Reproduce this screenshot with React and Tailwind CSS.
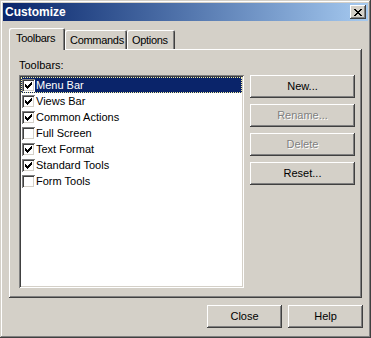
import React from 'react';

const FACE = 'bg-[#d4d0c8]';
const RAISED = 'shadow-[inset_-1px_-1px_#404040,inset_1px_1px_#ffffff,inset_-2px_-2px_#808080,inset_2px_2px_#d4d0c8]';
const TAB = 'rounded-t-[2px] shadow-[inset_1px_1px_#ffffff,inset_-1px_0_#404040,inset_-2px_0_#808080] tracking-[-0.3px]';

const toolbars = [
  { name: 'Menu Bar', on: true },
  { name: 'Views Bar', on: true },
  { name: 'Common Actions', on: true },
  { name: 'Full Screen', on: false },
  { name: 'Text Format', on: true },
  { name: 'Standard Tools', on: true },
  { name: 'Form Tools', on: false },
];

function Check() {
  // classic 7x7 pixel check mark
  const rows = ['......x', '.....xx', 'x...xxx', 'xx.xxx.', 'xxxxx..', '.xxx...', '..x....'];
  return (
    <svg width="7" height="7" viewBox="0 0 7 7" shapeRendering="crispEdges">
      {rows.map((r, y) =>
        r.split('').map((c, x) => (c === 'x' ? <rect key={`${x}-${y}`} x={x} y={y} width="1" height="1" fill="#000" /> : null))
      )}
    </svg>
  );
}

function Button({ children, disabled, className = '' }) {
  return (
    <div
      className={`h-[23px] flex items-center justify-center ${FACE} ${RAISED} ${className} ${
        disabled ? 'text-[#808080] [text-shadow:1px_1px_0_#ffffff]' : 'text-black'
      }`}
    >
      {children}
    </div>
  );
}

export default function App() {
  return (
    <div
      className={`w-[371px] h-[338px] ${FACE} p-[3px] flex flex-col text-[11px] leading-[13px] text-black shadow-[inset_-1px_-1px_#404040,inset_1px_1px_#d4d0c8,inset_-2px_-2px_#808080,inset_2px_2px_#ffffff]`}
      style={{ fontFamily: '"Liberation Sans", Arial, sans-serif' }}
    >
      {/* title bar */}
      <div className="h-[18px] flex items-center justify-between bg-gradient-to-r from-[#0a246a] to-[#a6caf0] pl-[2px] pr-[2px]">
        <span className="font-bold text-white text-[12px]">Customize</span>
        <div className={`w-[16px] h-[14px] ${FACE} ${RAISED} flex items-center justify-center`}>
          <svg width="8" height="7" viewBox="0 0 8 7" shapeRendering="crispEdges">
            <path d="M0 0h2v1h-2zM6 0h2v1h-2zM1 1h2v1h-2zM5 1h2v1h-2zM2 2h4v1h-4zM3 3h2v1h-2zM2 4h4v1h-4zM1 5h2v1h-2zM5 5h2v1h-2zM0 6h2v1h-2zM6 6h2v1h-2z" fill="#000" />
          </svg>
        </div>
      </div>

      <div className="px-[6px] flex flex-col">
        {/* tabs */}
        <div className="flex items-end mt-[7px] h-[21px] relative z-10">
          <div className={`w-[56px] h-[22px] ${FACE} ${TAB} pl-[7px] pt-[4px] -mb-[1px]`}>
            Toolbars
          </div>
          <div className={`w-[62px] h-[19px] ${FACE} ${TAB} pl-[5px] pt-[4px]`}>
            Commands
          </div>
          <div className={`w-[48px] h-[19px] ${FACE} ${TAB} pl-[5px] pt-[4px]`}>
            Options
          </div>
        </div>

        {/* tab panel */}
        <div className={`h-[249px] ${FACE} ${RAISED} pt-[10px] pl-[10px] flex items-start`}>
          <div className="flex flex-col">
            <div className="h-[13px] mb-[3px]">Toolbars:</div>
            <div className="w-[225px] h-[213px] bg-white p-[2px] shadow-[inset_1px_1px_#808080,inset_-1px_-1px_#ffffff,inset_2px_2px_#404040,inset_-2px_-2px_#d4d0c8]">
              {toolbars.map((t, i) => (
                <div
                  key={t.name}
                  className={`h-[16px] flex items-center ${
                    i === 0 ? 'bg-[#0a246a] text-white outline-1 outline-dotted outline-offset-[-1px] outline-[#f5f0a0]' : 'text-black'
                  }`}
                >
                  <div className="w-[13px] h-[13px] ml-[1px] bg-white flex items-center justify-center shadow-[inset_1px_1px_#808080,inset_-1px_-1px_#ffffff,inset_2px_2px_#404040,inset_-2px_-2px_#d4d0c8]">
                    {t.on && <Check />}
                  </div>
                  <span className="ml-[1px]">{t.name}</span>
                </div>
              ))}
            </div>
          </div>

          <div className="flex flex-col gap-[6px] mt-[16px] ml-[6px] w-[105px]">
            <Button>New...</Button>
            <Button disabled>Rename...</Button>
            <Button disabled>Delete</Button>
            <Button>Reset...</Button>
          </div>
        </div>

        {/* bottom buttons */}
        <div className="flex justify-end gap-[6px] mt-[7px] -mr-[1px]">
          <Button className="w-[75px]">Close</Button>
          <Button className="w-[75px]">Help</Button>
        </div>
      </div>
    </div>
  );
}
